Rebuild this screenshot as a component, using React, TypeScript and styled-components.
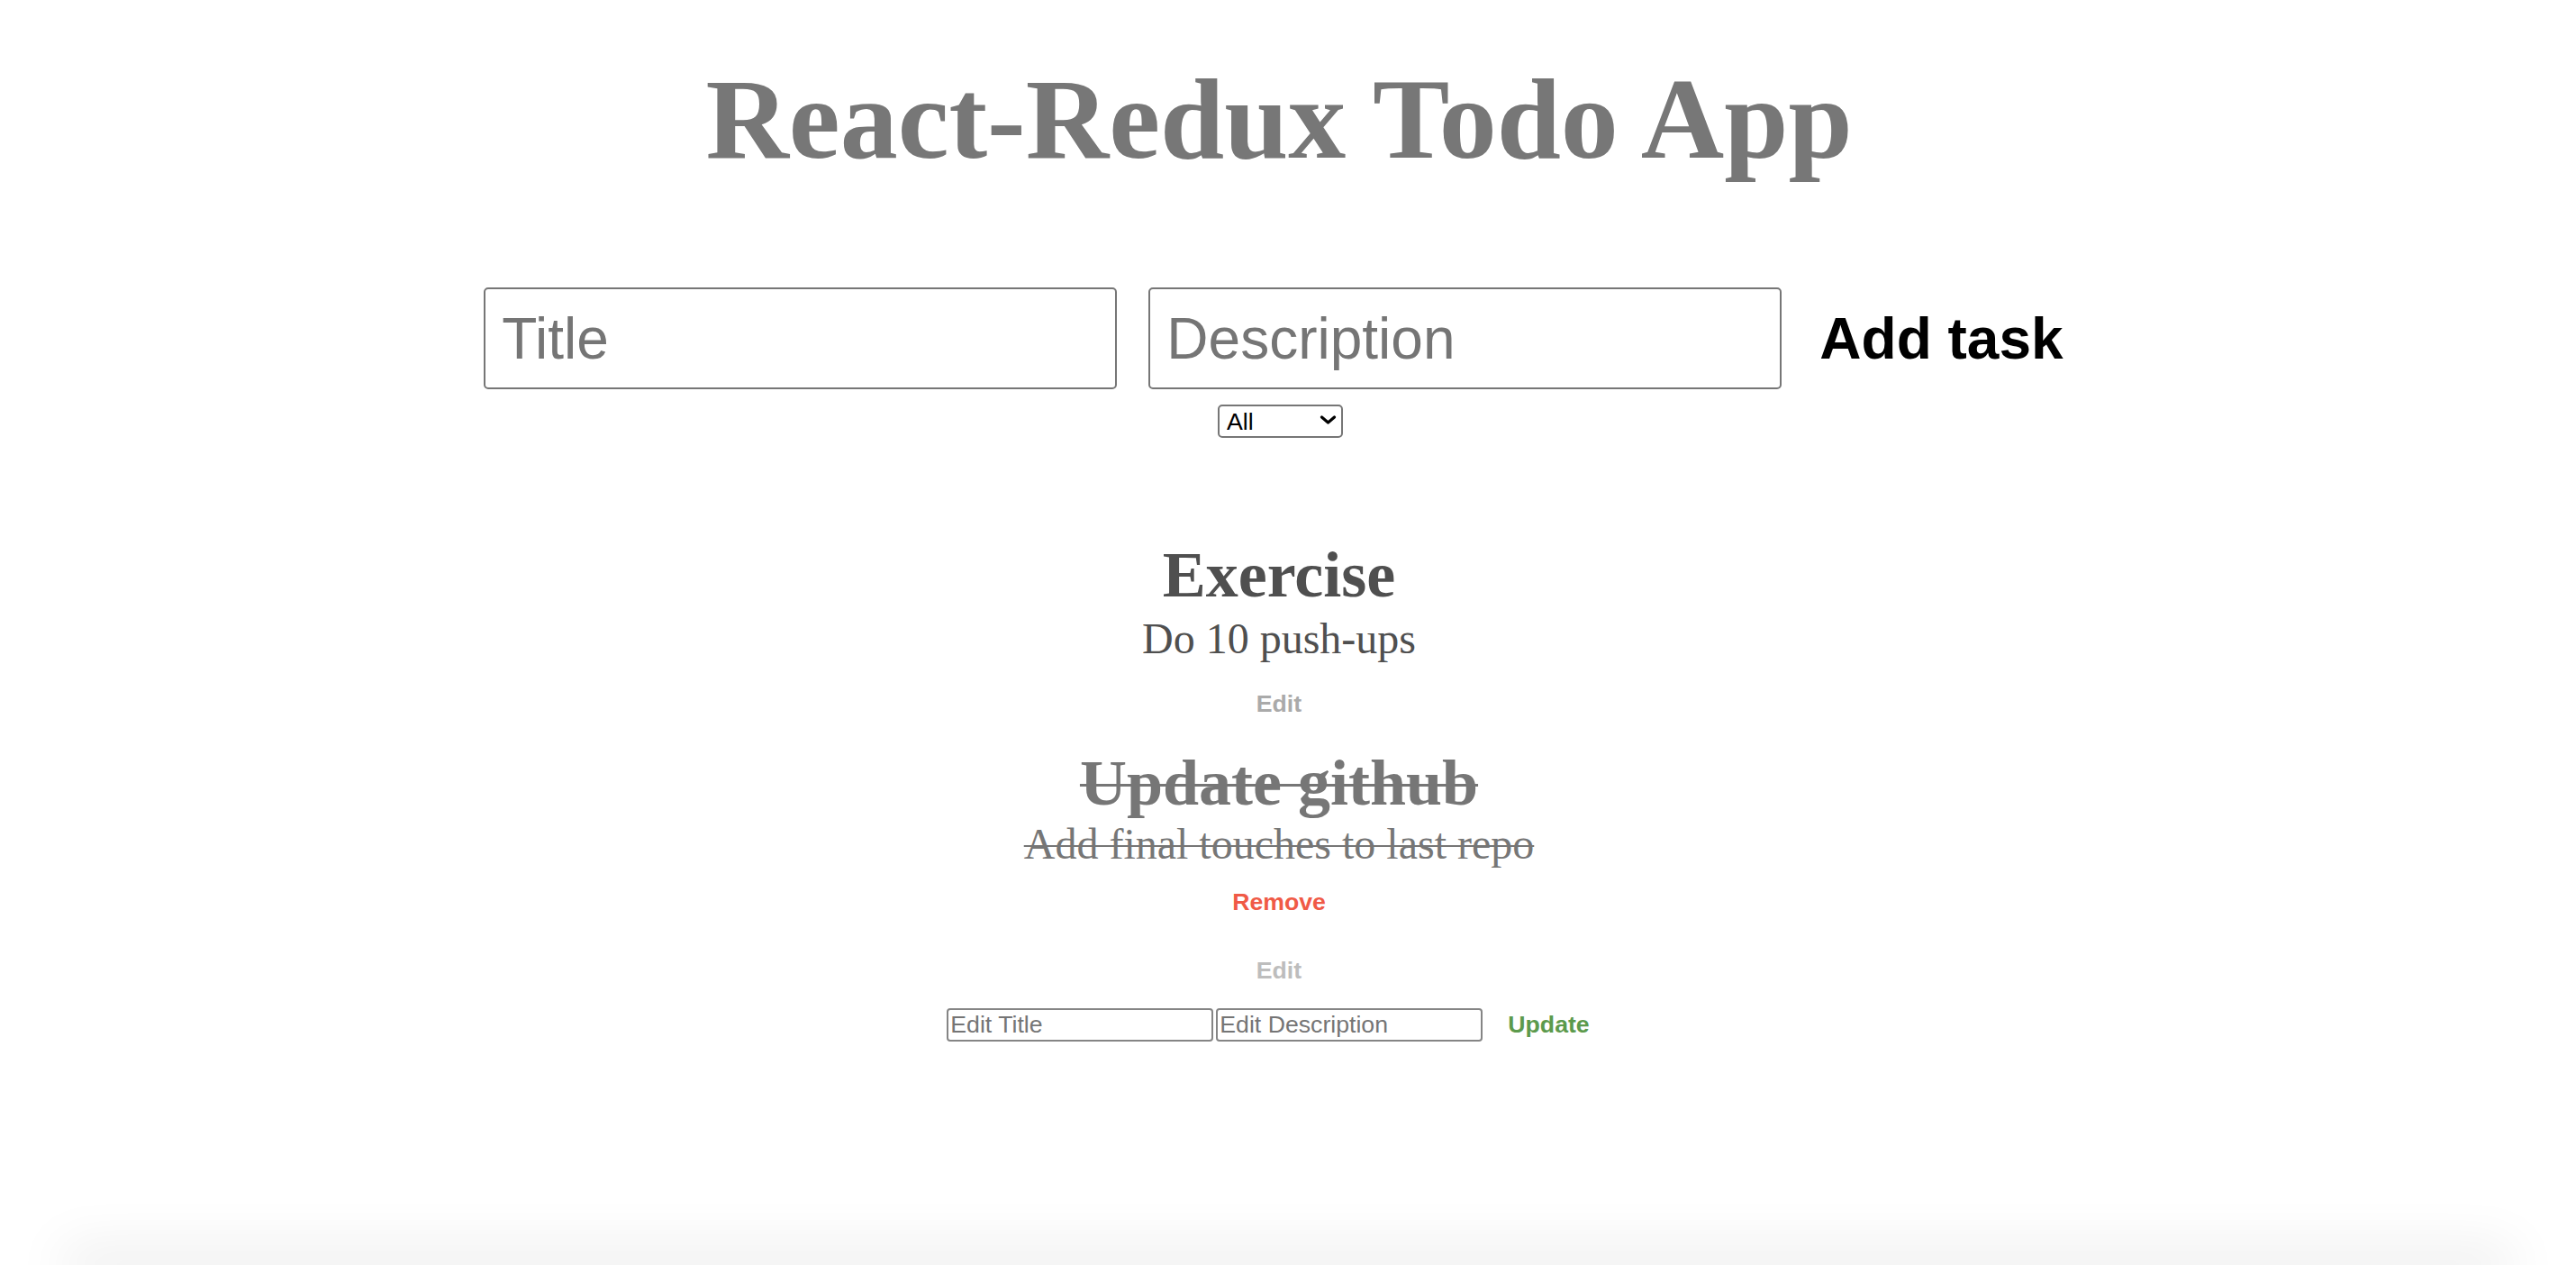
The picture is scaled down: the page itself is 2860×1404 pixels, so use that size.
import React, { useState } from 'react'
import styled, { createGlobalStyle } from 'styled-components'

const GlobalStyle = createGlobalStyle`
  html {
    overflow: hidden;
  }
  body {
    margin: 0;
    background: #ffffff;
    font-family: 'Liberation Serif', 'Times New Roman', serif;
  }
`

const Page = styled.div`
  box-sizing: border-box;
  min-height: 1404px;
  padding-right: 20px;
  display: flex;
  flex-direction: column;
  align-items: center;
`

const Heading = styled.h1`
  margin: 68px 0 0;
  font-size: 128px;
  line-height: 128px;
  font-weight: 700;
  color: #777777;
`

const TaskForm = styled.form`
  margin-top: 123px;
  display: flex;
  align-items: center;
`

const TextField = styled.input`
  box-sizing: border-box;
  width: 703px;
  height: 113px;
  margin-right: 35px;
  padding: 0 18px;
  border: 2px solid #767676;
  border-radius: 5px;
  font-family: 'Liberation Sans', Arial, sans-serif;
  font-size: 64px;
  color: #000;
  outline: none;
  &::placeholder {
    color: #757575;
  }
  &:last-of-type {
    margin-right: 30px;
  }
`

const AddButton = styled.button`
  padding: 0 12px;
  border: none;
  background: none;
  font-family: 'Liberation Sans', Arial, sans-serif;
  font-size: 64px;
  font-weight: 700;
  line-height: 74px;
  color: #000;
  cursor: pointer;
`

const FilterWrap = styled.div`
  position: relative;
  margin-top: 17px;
  margin-right: -3px;
`

const FilterSelect = styled.select`
  box-sizing: border-box;
  appearance: none;
  width: 139px;
  height: 37px;
  padding: 0 0 0 8px;
  border: 2px solid #767676;
  border-radius: 5px;
  background: #fff;
  font-family: 'Liberation Sans', Arial, sans-serif;
  font-size: 26.67px;
  color: #000;
  outline: none;
`

const Chevron = styled.svg`
  position: absolute;
  right: 7px;
  top: 12px;
  width: 19px;
  height: 10px;
  pointer-events: none;
`

const TodoList = styled.div`
  margin-top: 116px;
  display: flex;
  flex-direction: column;
  align-items: center;
`

const TodoItem = styled.div<{ $done: boolean }>`
  display: flex;
  flex-direction: column;
  align-items: center;
  color: ${({ $done }) => ($done ? '#767676' : '#4f4f4f')};
  & + & {
    margin-top: 38px;
  }
`

const TodoTitle = styled.h2<{ $done: boolean }>`
  margin: 0;
  font-size: 72px;
  line-height: 72px;
  font-weight: 700;
  text-decoration: ${({ $done }) => ($done ? 'line-through 3px' : 'none')};
`

const TodoDescription = styled.p<{ $done: boolean }>`
  margin: ${({ $done }) => ($done ? 8 : 11)}px 0 0;
  font-size: 48px;
  line-height: 48px;
  text-decoration: ${({ $done }) => ($done ? 'line-through 2px' : 'none')};
`

const tones = {
  edit: '#aaaaaa',
  muted: '#bdbdbd',
  remove: '#f05a46',
  update: '#5c9a4c',
}

const ActionButton = styled.button<{ $tone: keyof typeof tones; $gap?: number }>`
  margin-top: ${({ $gap }) => $gap ?? 0}px;
  padding: 0 12px;
  border: none;
  background: none;
  font-family: 'Liberation Sans', Arial, sans-serif;
  font-size: 26.67px;
  font-weight: 700;
  line-height: 27px;
  color: ${({ $tone }) => tones[$tone]};
  cursor: pointer;
`

const EditRow = styled.div`
  margin-top: 28px;
  padding-right: 12px;
  display: flex;
  align-items: center;
  gap: 3px;
`

const EditField = styled.input`
  box-sizing: border-box;
  width: 296px;
  height: 37px;
  padding: 0 2px;
  border: 2px solid #858585;
  border-radius: 4px;
  font-family: 'Liberation Sans', Arial, sans-serif;
  font-size: 26.67px;
  outline: none;
  &::placeholder {
    color: #757575;
  }
`

const UpdateButton = styled(ActionButton)`
  margin-left: 13px;
`

const Footer = styled.footer`
  height: 0;
  margin: 0 90px;
  box-shadow: 0 0 60px 20px rgba(0, 0, 0, 0.08);
`

type Todo = { id: number; title: string; description: string; done: boolean }

const initialTodos: Todo[] = [
  { id: 1, title: 'Exercise', description: 'Do 10 push-ups', done: false },
  { id: 2, title: 'Update github', description: 'Add final touches to last repo', done: true },
]

export default function App() {
  const [todos] = useState<Todo[]>(initialTodos)
  const [filter, setFilter] = useState('all')

  return (
    <>
      <GlobalStyle />
      <Page>
        <Heading>React-Redux Todo App</Heading>
        <TaskForm onSubmit={(e) => e.preventDefault()}>
          <TextField placeholder="Title" />
          <TextField placeholder="Description" />
          <AddButton type="submit">Add task</AddButton>
        </TaskForm>
        <FilterWrap>
          <FilterSelect value={filter} onChange={(e) => setFilter(e.target.value)}>
            <option value="all">All</option>
            <option value="done">Done</option>
            <option value="todo">Not done</option>
          </FilterSelect>
          <Chevron viewBox="0 0 19 10">
            <path d="M2.5 2 L9.5 8 L16.5 2" fill="none" stroke="#000" strokeWidth="3.2" strokeLinecap="round" strokeLinejoin="round" />
          </Chevron>
        </FilterWrap>
        <TodoList>
          {todos.map((todo) => (
            <TodoItem key={todo.id} $done={todo.done}>
              <TodoTitle $done={todo.done}>{todo.title}</TodoTitle>
              <TodoDescription $done={todo.done}>{todo.description}</TodoDescription>
              {todo.done ? (
                <>
                  <ActionButton $tone="remove" $gap={27}>Remove</ActionButton>
                  <ActionButton $tone="muted" $gap={49}>Edit</ActionButton>
                  <EditRow>
                    <EditField placeholder="Edit Title" />
                    <EditField placeholder="Edit Description" />
                    <UpdateButton $tone="update">Update</UpdateButton>
                  </EditRow>
                </>
              ) : (
                <ActionButton $tone="edit" $gap={35}>Edit</ActionButton>
              )}
            </TodoItem>
          ))}
        </TodoList>
      </Page>
      <Footer />
    </>
  )
}
